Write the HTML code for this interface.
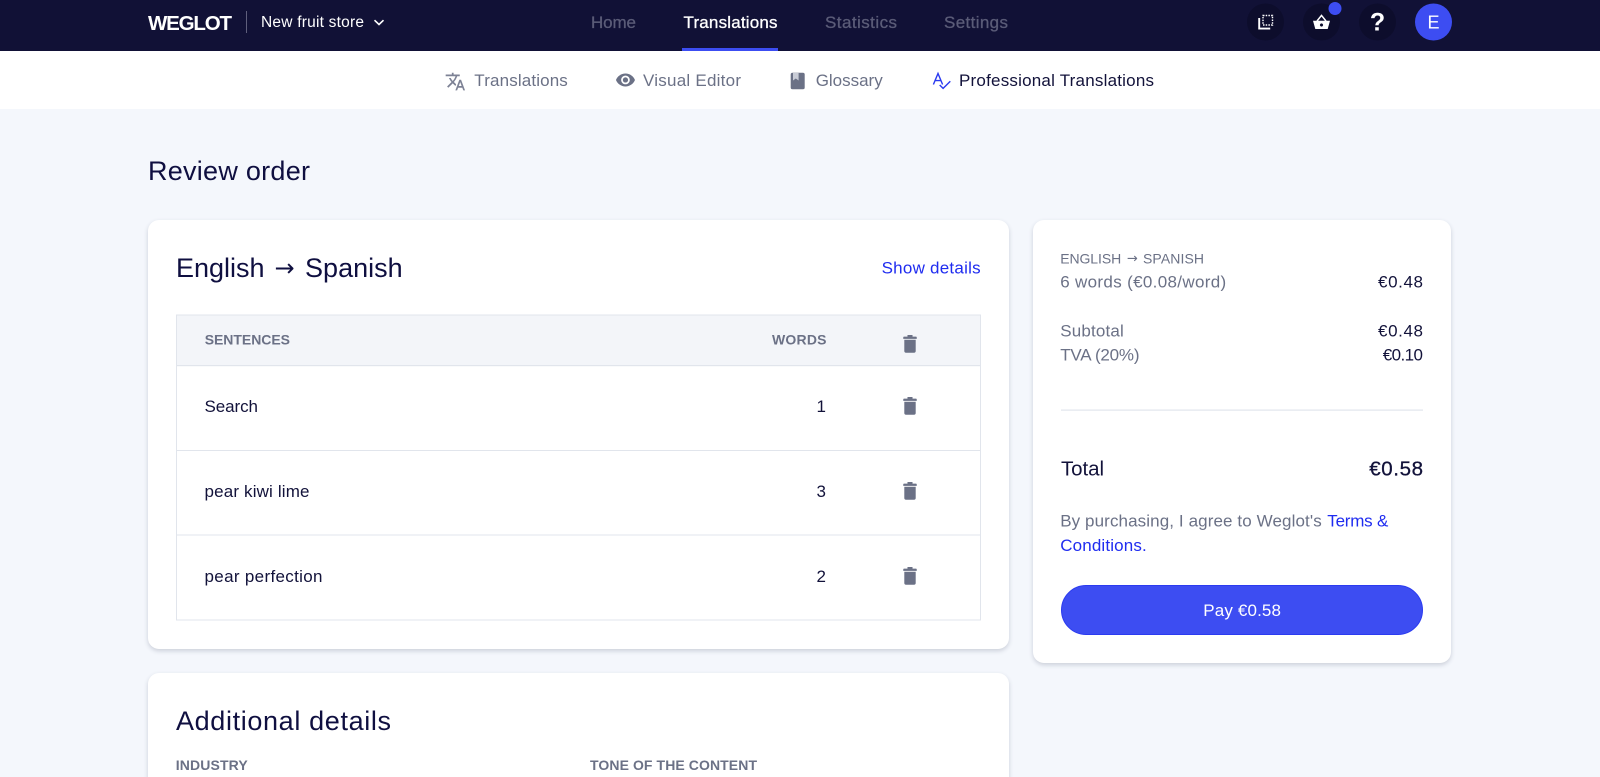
<!DOCTYPE html>
<html lang="en">
<head>
<meta charset="utf-8">
<title>Review order</title>
<style>
html,body{margin:0;padding:0;width:1600px;height:777px;overflow:hidden;background:#f4f7fc}
body{position:relative;font-family:"Liberation Sans",Arial,sans-serif}
.hdr{position:absolute;left:0;top:0;width:1600px;height:51px;background:#111136}
.sub{position:absolute;left:0;top:51px;width:1600px;height:58px;background:#fff}
.card{position:absolute;background:#fff;border-radius:11px;box-shadow:0 2px 5px rgba(40,50,80,.2)}
svg{position:absolute;left:0;top:0}
text{font-family:"Liberation Sans",Arial,sans-serif;font-size:17px;fill:#6b7186}
.d{fill:#12123a}
.h{font-size:27px;fill:#0f0f40}
.nav{fill:#5b5c78;stroke:#5b5c78;stroke-width:.3px}
.cap{font-size:14px;font-weight:bold;fill:#6b7186}
.b{fill:#1f2cf0}
.arrow{font-family:"DejaVu Sans",sans-serif}
</style>
</head>
<body>
<div class="hdr"></div>
<div class="sub"></div>
<div class="card" style="left:148px;top:220px;width:861px;height:429px"></div>
<div class="card" style="left:1033px;top:220px;width:418px;height:443px"></div>
<div class="card" style="left:148px;top:673px;width:861px;height:140px"></div>

<svg width="1600" height="777" viewBox="0 0 1600 777" xmlns="http://www.w3.org/2000/svg">
  <defs>
    <g id="trash">
      <path d="M-2.8 -9h5.6v1.6h3.9a.8.8 0 0 1 .8.8v1.5h-15v-1.5a.8.8 0 0 1 .8-.8h3.9z" fill="#6b7186" transform="scale(.9 1)"/>
      <path d="M-5.7 -4.2h11.4v11.2a1.7 1.7 0 0 1-1.7 1.7h-8a1.7 1.7 0 0 1-1.7-1.7z" fill="#6b7186"/>
    </g>
  </defs>

  <!-- top bar -->
  <text x="148" y="30" textLength="84" style="font-size:20.5px;font-weight:bold;fill:#fff">WEGLOT</text>
  <rect x="246" y="11" width="1" height="22" fill="#5f5f7c"/>
  <text x="261" y="27" textLength="103" style="font-size:15.5px;fill:#fff">New fruit store</text>
  <path d="M374.5 20.2l4.5 4.3 4.5-4.3" fill="none" stroke="#fff" stroke-width="1.6"/>

  <text class="nav" x="591" y="28" textLength="45">Home</text>
  <text x="683.5" y="28" textLength="94" style="fill:#fff;stroke:#fff;stroke-width:.3px">Translations</text>
  <text class="nav" x="825" y="28" textLength="72">Statistics</text>
  <text class="nav" x="944" y="28" textLength="64">Settings</text>
  <rect x="682" y="48" width="96" height="3" fill="#3c4df2"/>

  <circle cx="1265.5" cy="22" r="18.5" fill="#0d0d2c"/>
  <circle cx="1321.5" cy="22" r="18.5" fill="#0d0d2c"/>
  <circle cx="1377.5" cy="22" r="18.5" fill="#0d0d2c"/>
  <circle cx="1433.5" cy="22" r="18.5" fill="#3d4df2"/>
  <circle cx="1335" cy="8.5" r="6.5" fill="#3d4df2"/>

  <rect x="1263" y="15.5" width="9.5" height="9.5" fill="none" stroke="#fff" stroke-width="1.4" stroke-dasharray="1.5 1.2"/>
  <path d="M1259.2 18v10.6h11" fill="none" stroke="#fff" stroke-width="1.9"/>

  <path fill-rule="evenodd" d="M1313 20.8h17l-2.3 8.2h-12.4zM1321.5 23.4a1.6 1.6 0 1 0 .01 0z" fill="#fff"/>
  <path d="M1317 21l4.5-5.6 4.5 5.6" fill="none" stroke="#fff" stroke-width="1.5"/>

  <text x="1377.5" y="30.5" text-anchor="middle" style="font-size:25px;font-weight:bold;fill:#fff">?</text>
  <text x="1433.5" y="28.5" text-anchor="middle" style="font-size:18px;fill:#fff">E</text>

  <!-- sub nav -->
  <path transform="translate(444.8 71) scale(.88)" fill="#6b7186" fill-opacity=".88" d="M12.87 15.07l-2.54-2.51.03-.03c1.74-1.94 2.98-4.17 3.71-6.53H17V4h-7V2H8v2H1v1.99h11.17C11.5 7.92 10.44 9.75 9 11.35 8.07 10.32 7.3 9.19 6.69 8h-2c.73 1.63 1.73 3.17 2.98 4.56l-5.09 5.02L4 19l5-5 3.11 3.11.76-2.04zM18.5 10h-2L12 22h2l1.12-3h4.75L21 22h2l-4.5-12zm-2.62 7l1.62-4.33L19.12 17h-3.24z"/>
  <text x="474.3" y="86" textLength="93.5">Translations</text>
  <path transform="translate(615.1 69.6) scale(.864)" fill="#6b7186" d="M12 4.5C7 4.5 2.73 7.61 1 12c1.73 4.39 6 7.5 11 7.5s9.27-3.11 11-7.5c-1.73-4.39-6-7.5-11-7.5zM12 17c-2.76 0-5-2.24-5-5s2.24-5 5-5 5 2.24 5 5-2.24 5-5 5zm0-8c-1.66 0-3 1.34-3 3s1.34 3 3 3 3-1.34 3-3-1.34-3-3-3z"/>
  <text x="643" y="86" textLength="98">Visual Editor</text>
  <rect x="790.7" y="72.8" width="14" height="16.5" rx="1.8" fill="#6b7186"/>
  <path d="M793 73v7.5l2.8-2 2.8 2V73z" fill="#c9ccd6"/>
  <text x="815.7" y="86" textLength="67">Glossary</text>
  <path d="M933.4 84.5L938 73.5l4.6 11M935 80.6h6.2M939.7 85l3.4 3.4 7.2-7.2" fill="none" stroke="#2a3af0" stroke-width="1.4"/>
  <text class="d" x="959" y="86" textLength="195">Professional Translations</text>

  <!-- heading -->
  <text class="h" x="148" y="180" textLength="162">Review order</text>

  <!-- left card -->
  <text class="h" x="176" y="277" textLength="88.5">English</text>
  <text class="h arrow" x="274.5" y="276" textLength="20.5" style="font-size:24px">→</text>
  <text class="h" x="305" y="277" textLength="97.7">Spanish</text>
  <text class="b" x="881.6" y="273.5" textLength="99">Show details</text>

  <rect x="176.5" y="315" width="804" height="305" fill="#fff" stroke="#e1e5ec"/>
  <rect x="177" y="315.5" width="803" height="50" fill="#f3f5f9"/>
  <rect x="177" y="365" width="803" height="1.2" fill="#e1e5ec"/>
  <rect x="177" y="450" width="803" height="1" fill="#e1e5ec"/>
  <rect x="177" y="534.5" width="803" height="1" fill="#e1e5ec"/>

  <text class="cap" x="204.7" y="344.5" textLength="85.3">SENTENCES</text>
  <text class="cap" x="772" y="344.5" textLength="54.5">WORDS</text>
  <use href="#trash" x="910" y="344"/>

  <text class="d" x="204.5" y="412" textLength="53.5">Search</text>
  <text class="d" x="826" y="412" text-anchor="end">1</text>
  <use href="#trash" x="910" y="406"/>

  <text class="d" x="204.5" y="497" textLength="105">pear kiwi lime</text>
  <text class="d" x="826" y="497" text-anchor="end">3</text>
  <use href="#trash" x="910" y="491"/>

  <text class="d" x="204.5" y="582" textLength="118">pear perfection</text>
  <text class="d" x="826" y="582" text-anchor="end">2</text>
  <use href="#trash" x="910" y="576"/>

  <!-- additional details -->
  <text class="h" x="176" y="730" textLength="215">Additional details</text>
  <text class="cap" x="175.7" y="770" textLength="72">INDUSTRY</text>
  <text class="cap" x="590" y="770" textLength="167">TONE OF THE CONTENT</text>

  <!-- right card -->
  <text x="1060.2" y="263.3" textLength="61" style="font-size:14px">ENGLISH</text>
  <text class="arrow" x="1127" y="262.5" textLength="11" style="font-size:13px">→</text>
  <text x="1143" y="263.3" textLength="61" style="font-size:14px">SPANISH</text>
  <text x="1060.2" y="287.4" textLength="166">6 words (€0.08/word)</text>
  <text class="d" x="1378" y="287.4" textLength="45">€0.48</text>
  <text x="1060.2" y="336.3" textLength="63.6">Subtotal</text>
  <text class="d" x="1378" y="336.3" textLength="45">€0.48</text>
  <text x="1060.2" y="360.6" textLength="79.3">TVA (20%)</text>
  <text class="d" x="1382.7" y="360.6" textLength="40.3">€0.10</text>
  <rect x="1061" y="409.5" width="362" height="1.2" fill="#e1e5ec"/>
  <text class="d" x="1061" y="475.3" textLength="43" style="font-size:20.5px">Total</text>
  <text class="d" x="1369.3" y="475.3" textLength="53.7" style="font-size:20.5px;stroke:#12123a;stroke-width:.3px">€0.58</text>
  <text x="1060.2" y="526.6" textLength="261.5">By purchasing, I agree to Weglot's</text>
  <text class="b" x="1327.3" y="526.6" textLength="61">Terms &amp;</text>
  <text class="b" x="1060.2" y="551" textLength="86.5">Conditions.</text>
  <rect x="1061.5" y="585.5" width="361" height="49" rx="24.5" fill="#3d4df2" stroke="#2b3bf0"/>
  <text x="1203.3" y="616.2" textLength="77.7" style="fill:#fff">Pay €0.58</text>
</svg>
</body>
</html>
